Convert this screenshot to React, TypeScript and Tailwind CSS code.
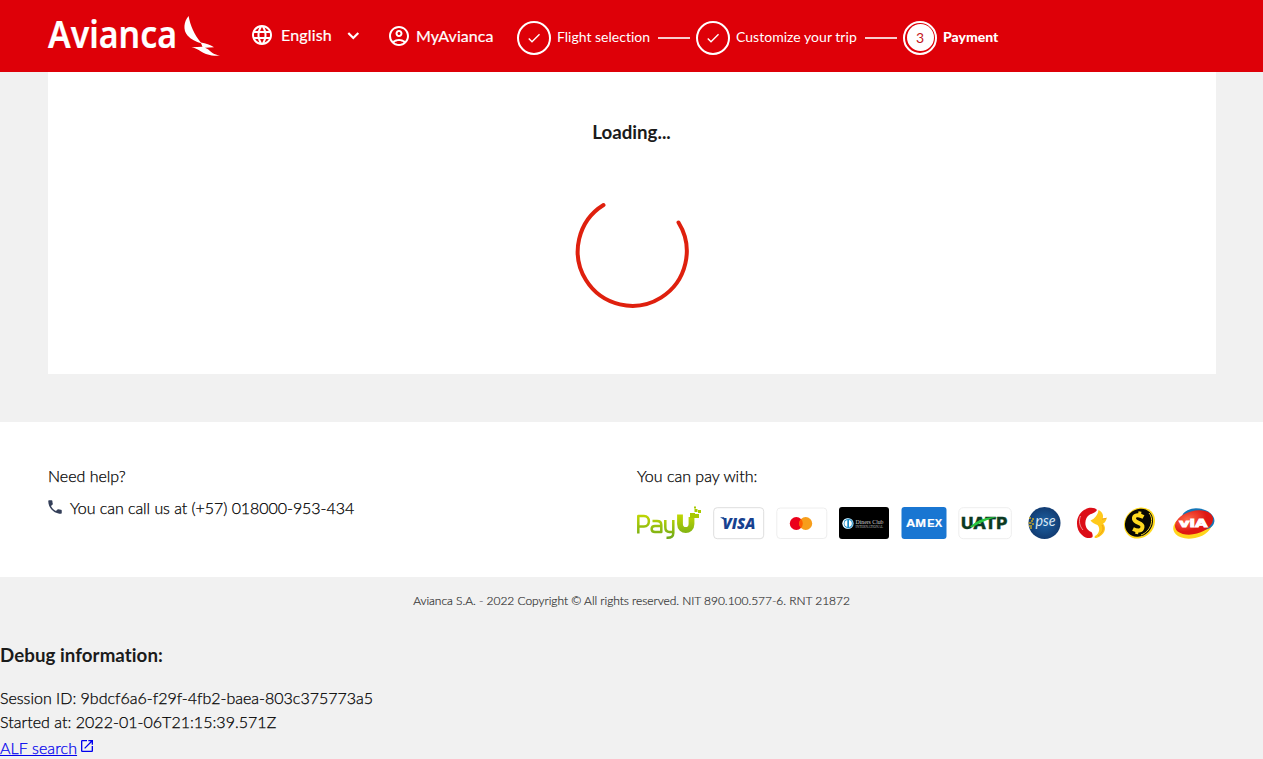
import React from "react";
import {
  MdLanguage,
  MdOutlineAccountCircle,
  MdCheck,
  MdPhone,
  MdOpenInNew,
} from "react-icons/md";

function AviancaLogo() {
  return (
    <svg width="174" height="46" viewBox="0 0 174 46" className="block shrink-0 overflow-visible" aria-label="Avianca">
      <text x="0" y="34.8" fontFamily="'Noto Sans'" fontWeight="600" fontSize="37" textLength="129" lengthAdjust="spacingAndGlyphs" fill="#fff" stroke="#fff" strokeWidth=".2">
        Avianca
      </text>
      <path
        fill="#fff"
        d="M140.600 3C135.800 8.500 134.800 17 139.500 22.500C143 26.500 148 28.800 153 30.200L154.500 33.800L143.500 34.300C150 35.500 151.500 38.500 158 41C163 42.800 168 43 172 42.700C166 41.500 163 39.300 160 36.300L157 34.700L166 34.200C162 31.500 158 30.500 152.800 29.400C146 21 142.500 13 140.600 3Z"
      />
    </svg>
  );
}

function Step({ label, children, active = false, className, labelClassName = "" }: { label: string; children: React.ReactNode; active?: boolean; className: string; labelClassName?: string }) {
  return (
    <div className={`flex shrink-0 items-center ${className}`}>
      <span className="flex size-[34px] shrink-0 items-center justify-center rounded-full border-2 border-white">
        {active ? (
          <span className="flex size-[27px] items-center justify-center rounded-full bg-white text-sm text-[#c4161c]">{children}</span>
        ) : (
          children
        )}
      </span>
      <span className={`relative -top-px ml-1.5 whitespace-nowrap text-sm ${active ? "font-black" : ""} ${labelClassName}`}>{label}</span>
    </div>
  );
}

function Connector() {
  return <span className="h-[2px] w-8 shrink-0 bg-white/80" />;
}

function PayU() {
  return (
    <svg width="65" height="34" viewBox="0 0 65 34" className="overflow-visible">
      <defs>
        <linearGradient id="payu" gradientUnits="userSpaceOnUse" x1="0" y1="6" x2="0" y2="32">
          <stop offset="0" stopColor="#c9dc00" />
          <stop offset="1" stopColor="#71aa18" />
        </linearGradient>
      </defs>
      <g fill="none" stroke="url(#payu)" strokeWidth="2.500" strokeLinejoin="round">
        <path d="M1.300 27.500V10H7C13.500 10 13.500 20.500 7 20.500H1.500" />
        <path d="M15.500 15H20C23 15 24.300 16.300 24.300 19V26H18C13.500 26 13.500 20 18 20H24" />
        <path d="M28.300 14V21C28.300 24.500 29.500 26 32.500 26H36M36.300 14V27C36.300 30.500 34.500 32 29.500 31.700" />
        <path strokeWidth="5.800" d="M43 8.500V18C43 26 54.500 26 54.500 18V11" />
      </g>
      <path fill="#a8c900" d="M53 7h5v5h-5zM57.500 3h3v3h-3zM61 4h3v3h-3zM58 8h4v4h-4zM57 .5h2v2h-2z" />
    </svg>
  );
}

function Visa() {
  return (
    <svg width="52" height="34" viewBox="0 0 52 34">
      <rect x=".7" y="1.700" width="50" height="31" rx="3.500" fill="#fff" stroke="#dedede" />
      <text x="9.500" y="23" fontFamily="'Open Sans'" fontStyle="italic" fontWeight="800" fontSize="16.500" textLength="33" lengthAdjust="spacingAndGlyphs" fill="#17418f">
        VISA
      </text>
      <path d="M7 11.300H11L13 15Z" fill="#17418f" />
    </svg>
  );
}

function Mastercard() {
  return (
    <svg width="52" height="34" viewBox="0 0 52 34">
      <rect x=".8" y="2" width="50" height="30.500" rx="3.500" fill="#fff" stroke="#eee" />
      <circle cx="20.300" cy="17.500" r="6.500" fill="#eb001b" />
      <circle cx="29.700" cy="17.500" r="6.500" fill="#f79e1b" />
      <path d="M25 13A6.500 6.500 0 0 1 25 22A6.500 6.500 0 0 1 25 13Z" fill="#ff5f00" />
    </svg>
  );
}

function Diners() {
  return (
    <svg width="50" height="34" viewBox="0 0 50 34">
      <rect x="0" y="1" width="50" height="32" rx="3" fill="#000" />
      <circle cx="9" cy="17.500" r="5.600" fill="#9fd0ea" />
      <circle cx="8.300" cy="17.500" r="4.800" fill="#fff" />
      <circle cx="9.200" cy="17.500" r="4.500" fill="#1789c4" />
      <path d="M8.300 13.900V21.100A3.700 3.700 0 0 1 8.300 13.900ZM10 13.900V21.100A3.700 3.700 0 0 0 10 13.900Z" fill="#fff" />
      <text x="16.500" y="17.800" fontFamily="'Liberation Serif'" fontSize="7" textLength="28" lengthAdjust="spacingAndGlyphs" fill="#ccc">
        Diners Club
      </text>
      <text x="16.500" y="21.500" fontFamily="'Liberation Serif'" fontSize="3.600" textLength="27.500" lengthAdjust="spacingAndGlyphs" fill="#bbb">
        INTERNATIONAL
      </text>
    </svg>
  );
}

function Amex() {
  return (
    <svg width="46" height="34" viewBox="0 0 46 34">
      <rect x=".5" y="1" width="45" height="32" rx="3" fill="#1976d2" />
      <text x="5" y="20.500" fontFamily="'Liberation Sans'" fontWeight="700" fontSize="11" textLength="20" lengthAdjust="spacingAndGlyphs" fill="#fff" stroke="#fff" strokeWidth=".2">
        AM
      </text>
      <text x="26.300" y="20.500" fontFamily="'Liberation Sans'" fontWeight="700" fontSize="11" textLength="14.800" lengthAdjust="spacingAndGlyphs" fill="#fff" stroke="#fff" strokeWidth=".2">
        EX
      </text>
    </svg>
  );
}

function Uatp() {
  return (
    <svg width="54" height="34" viewBox="0 0 54 34">
      <rect x=".8" y="1.700" width="52.500" height="31" rx="4.500" fill="#fff" stroke="#eee" />
      <text x="3" y="22.800" fontFamily="Inter" fontWeight="800" fontSize="15.500" textLength="46.500" lengthAdjust="spacingAndGlyphs" fill="#0c3a22" stroke="#0c3a22" strokeWidth=".3">
        UATP
      </text>
      <path d="M12 20.500C19 15 26 10.500 40 11C32 12 22 17 14 21.500Z" fill="#28c840" />
    </svg>
  );
}

function Pse() {
  return (
    <svg width="34" height="34" viewBox="0 0 34 34">
      <defs>
        <radialGradient id="pse">
          <stop offset="0" stopColor="#1d62a5" />
          <stop offset="1" stopColor="#123c72" />
        </radialGradient>
      </defs>
      <circle cx="17.500" cy="17" r="16" fill="url(#pse)" />
      <text x="8.500" y="20.300" fontFamily="Lato" fontStyle="italic" fontWeight="400" fontSize="15.500" textLength="20" lengthAdjust="spacingAndGlyphs" fill="#dce7f3">
        pse
      </text>
      <path d="M2 12h2M4 15h2M1.500 17h3M5 13h2M2 20h3M5 18h2M3 22h2" stroke="#c6a728" strokeWidth="1.500" />
    </svg>
  );
}

function Baloto() {
  return (
    <svg width="32" height="34" viewBox="0 0 32 34">
      <path d="M21 4C19 1.500 13 .8 8 4C-1 10 -1 23 6 29C10 33 15 32.500 16.500 31C17 29 16.500 27.500 15.500 26C9.500 24 8 17 10.500 12C13 7 19 8 21 4Z" fill="#dc0d17" />
      <path d="M4.500 10C2.500 15 3.500 20 7 24" fill="none" stroke="#fff" strokeWidth=".8" opacity=".7" />
      <path d="M14.500 14.500C18.500 13 22 9 22.500 4C26.500 6 28 9.500 26.500 13L31 11.500C30 15.500 28.500 17 27 17.500C31 22 29 29 20.500 32C18.500 32.500 18 31 19 30C23.500 27.500 24.500 22 21.500 19C19 18 16 17 14.500 14.500Z" fill="#ffc91a" />
      <path d="M26 19C28.500 22.500 26.500 27 22 30M26 13L30 12.500" fill="none" stroke="#f0a015" strokeWidth="1" />
    </svg>
  );
}

function Efecty() {
  return (
    <svg width="32" height="34" viewBox="0 0 32 34">
      <ellipse cx="16.500" cy="17" rx="16.500" ry="14.500" transform="rotate(-45 16.500 17)" fill="#ffda20" />
      <ellipse cx="16" cy="16.700" rx="15" ry="13" transform="rotate(-45 16 16.700)" fill="#090903" />
      <path d="M26 7C32 14 27 26 18 29" fill="none" stroke="#ffda20" strokeWidth="1" />
      <path d="M20.500 11C15 8 10.500 9 11 13C12 17.500 20 16.500 19.500 21C19 25.500 14 25 10 23" fill="none" stroke="#ffda20" strokeWidth="4" />
      <path d="M17 5.500L16.300 10M14.300 24L13.600 28" stroke="#ffda20" strokeWidth="3" />
    </svg>
  );
}

function Via() {
  return (
    <svg width="44" height="34" viewBox="0 0 44 34">
      <defs>
        <radialGradient id="via" cx=".35" cy=".3">
          <stop offset="0" stopColor="#ff6a4a" />
          <stop offset="1" stopColor="#df1712" />
        </radialGradient>
      </defs>
      <ellipse cx="20.500" cy="20" rx="19.500" ry="12.300" transform="rotate(-12 20.500 20)" fill="#ffd51d" />
      <ellipse cx="26" cy="13.500" rx="16.500" ry="11" transform="rotate(8 26 13.500)" fill="#1476b8" />
      <ellipse cx="22" cy="16.500" rx="19.500" ry="11.500" transform="rotate(-15 22 16.500)" fill="url(#via)" />
      <text x="7" y="20.500" fontFamily="'DejaVu Sans'" fontWeight="700" fontSize="10" textLength="28.500" lengthAdjust="spacingAndGlyphs" fill="#fff" stroke="#fff" strokeWidth=".8">
        viA
      </text>
    </svg>
  );
}

export default function App() {
  return (
    <div className="h-[759px] w-[1263px] overflow-hidden bg-[#f1f1f1] font-['Lato',sans-serif] text-base font-light text-[#1b1b1b] [font-variant-ligatures:none]">
      <header className="flex h-[72px] items-center bg-[#de0008] pl-12 font-normal text-white">
        <AviancaLogo />
        <div className="relative -top-px ml-[28px] flex w-[137px] shrink-0 items-center">
          <MdLanguage size={24} className="shrink-0" />
          <span className="ml-[7px] w-[62px] tracking-[0.15px] [-webkit-text-stroke:0.2px]">English</span>
          <svg width="20" height="20" viewBox="0 0 20 20" className="mt-0.5 shrink-0">
            <path d="M5.300 7L10.300 12L15.300 7" fill="none" stroke="currentColor" strokeWidth="2.200" />
          </svg>
        </div>
        <div className="flex w-[130px] shrink-0 items-center">
          <MdOutlineAccountCircle size={24} className="shrink-0" />
          <span className="ml-[5px] tracking-[0.05px] [-webkit-text-stroke:0.2px]">MyAvianca</span>
        </div>
        <div className="flex shrink-0 items-center pt-[3px]">
          <Step label="Flight selection" className="w-[141px]">
            <MdCheck size={16} />
          </Step>
          <Connector />
          <Step label="Customize your trip" className="ml-1.5 w-[169px]" labelClassName="tracking-[0.03px]">
            <MdCheck size={16} />
          </Step>
          <Connector />
          <Step label="Payment" active className="ml-1.5">
            3
          </Step>
        </div>
      </header>

      <main className="mx-12 mr-[47px] flex h-[302px] flex-col items-center bg-white pt-12">
        <h1 className="mr-px text-[18.72px] font-bold leading-6">Loading...</h1>
        <svg width="116" height="116" viewBox="0 0 116 116" className="mr-px mt-[49px] block">
          <path d="M29.500 12A54.500 54.500 0 1 0 104.500 29.500" fill="none" stroke="#df200e" strokeWidth="4" strokeLinecap="round" />
        </svg>
      </main>

      <section className="mt-12 flex h-[155px] bg-white px-12 pt-[42px] text-black [-webkit-text-stroke:0.25px]">
        <div className="w-[589px] shrink-0">
          <p className="leading-6">Need help?</p>
          <p className="mt-2 flex leading-6">
            <MdPhone size={18} className="-ml-0.5 mt-0.5 text-[#343f59]" />
            <span className="ml-1.5 tracking-[-0.05px]">You can call us at (+57) 018000-953-434</span>
          </p>
        </div>
        <div className="shrink-0">
          <p className="leading-6">You can pay with:</p>
          <div className="mt-[18px] flex items-center [-webkit-text-stroke:0]">
            <PayU />
            <div className="ml-[11px]"><Visa /></div>
            <div className="ml-[11px]"><Mastercard /></div>
            <div className="ml-[11px]"><Diners /></div>
            <div className="ml-[12px]"><Amex /></div>
            <div className="ml-[11px]"><Uatp /></div>
            <div className="ml-[15px]"><Pse /></div>
            <div className="ml-[15px]"><Baloto /></div>
            <div className="ml-[15px]"><Efecty /></div>
            <div className="ml-[17px]"><Via /></div>
          </div>
        </div>
      </section>

      <footer className="pt-[15px] text-center text-xs leading-[18px] tracking-[-0.04px] text-[#333] [-webkit-text-stroke:0.2px]">
        Avianca S.A. - 2022 Copyright © All rights reserved. NIT 890.100.577-6. RNT 21872
      </footer>

      <section className="pt-[33px]">
        <h2 className="text-[18.72px] font-bold leading-6 tracking-[0.06px]">Debug information:</h2>
        <div className="mt-[19px] leading-6 text-black [-webkit-text-stroke:0.25px]">
          <p>Session ID: 9bdcf6a6-f29f-4fb2-baea-803c375773a5</p>
          <p className="tracking-[0.03px]">Started at: 2022-01-06T21:15:39.571Z</p>
          <a href="#" className="mt-[2px] flex text-[#0000ee]">
            <span className="tracking-[0.1px] underline">ALF search</span>
            <MdOpenInNew size={16} className="ml-0.5 mt-0.5" />
          </a>
        </div>
      </section>
    </div>
  );
}
